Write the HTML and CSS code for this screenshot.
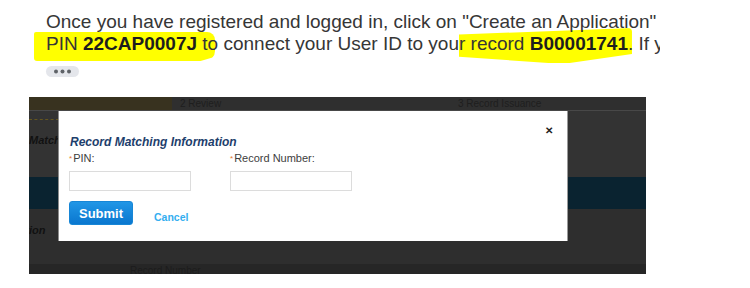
FILE: index.html
```html
<!DOCTYPE html>
<html lang="en">

<head>
    <meta charset="UTF-8">
    <title>Record Matching</title>
    <link rel="stylesheet" href="styles.css">
</head>

<body>
    <div class="message">
        <div class="text">
            <div class="line">Once you have registered and logged in, click on "Create an Application"</div>
            <div class="line"><span class="hl hl-one">PIN <b>22CAP0007J</b></span> to connect your User ID to you<span class="hl hl-two">r record <b>B00001741</b></span>. If you want</div>
        </div>
        <div class="more">
            <svg width="33" height="11" viewBox="0 0 33 11">
                <circle cx="10" cy="5.5" r="2" fill="#5f6368" />
                <circle cx="16.5" cy="5.5" r="2" fill="#5f6368" />
                <circle cx="23" cy="5.5" r="2" fill="#5f6368" />
            </svg>
        </div>
    </div>

    <div class="shot">
        <!-- steps bar -->
        <div class="steps">
            <div class="step step-done"></div>
            <div class="step step-review">2 Review</div>
            <div class="step">3 Record Issuance</div>
        </div>
        <div class="dash"></div>
        <div class="panel">
            <div class="panel-title">Matching</div>
        </div>
        <div class="navy"></div>
        <div class="lower">
            <div class="lower-title">Confirmation</div>
        </div>
        <div class="table-head">
            <span>Record Number</span>
        </div>

        <!-- modal dialog -->
        <div class="modal">
            <div class="modal-top">
                <span class="close">&#x2715;</span>
            </div>
            <h2 class="modal-title">Record Matching Information</h2>
            <div class="fields">
                <div class="field">
                    <label><span class="req">*</span>PIN:</label>
                    <input type="text">
                </div>
                <div class="field">
                    <label><span class="req">*</span>Record Number:</label>
                    <input type="text">
                </div>
            </div>
            <div class="actions">
                <button class="submit">Submit</button>
                <a class="cancel">Cancel</a>
            </div>
        </div>
    </div>
</body>

</html>
```

FILE: styles.css
```css
body {
    margin: 0;
    padding: 0;
    background-color: #fff;
    font-family: 'Liberation Sans', Arial, sans-serif;
}

.message {
    padding: 11px 0 0 34px;
}

.text {
    width: 626px;
    box-sizing: border-box;
    padding: 0 0 8px 12px;
    overflow: hidden;
    position: relative;
    z-index: 0;
}

.line {
    font-size: 19px;
    line-height: 22px;
    color: #363636;
    white-space: nowrap;
}

.line b {
    color: #1e1e1e;
}

.hl {
    position: relative;
}

.hl::before {
    content: "";
    position: absolute;
    background-color: #ffff00;
    z-index: -1;
}

.hl-one::before {
    top: -1px;
    bottom: -7px;
    left: -12px;
    right: -18px;
    border-radius: 2px 8px 10px 3px;
    clip-path: polygon(0 0, 100% 0, 100% 85%, 92% 100%, 0 100%);
}

.hl-two::before {
    top: -5px;
    bottom: -10px;
    left: 0;
    right: -4px;
    border-radius: 4px;
    clip-path: polygon(0 18%, 100% 0, 100% 72%, 60% 100%, 0 80%);
}

.more {
    width: 33px;
    height: 11px;
    margin: 3px 0 0 12px;
    background-color: #e4e6eb;
    border-radius: 6px;
}

.more svg {
    display: block;
}

/* screenshot of the application */
.shot {
    position: relative;
    margin: 20px 0 0 29px;
    width: 617px;
    height: 177px;
    overflow: hidden;
    background-color: #333;
    font-size: 10px;
    color: #1c1c1c;
}

.steps {
    display: flex;
    height: 13px;
    background-color: #2f2f2f;
    border-bottom: 1px solid #484848;
}

.step {
    flex: 1;
    padding: 2px 0 0 8px;
    line-height: 10px;
    color: #1e1e1e;
}

.step-done {
    flex: 0 0 143px;
    padding: 0;
    background-color: #38321f;
}

.step-review {
    flex: 0 0 270px;
}

.dash {
    width: 30px;
    height: 0;
    margin-top: 8px;
    border-top: 1px dashed #65561f;
}

.panel {
    height: 57px;
}

.panel-title {
    padding-top: 14px;
    font-size: 11px;
    font-weight: bold;
    font-style: italic;
    color: #111;
}

.navy {
    height: 32px;
    background-color: #0a2330;
}

.lower {
    height: 55px;
    background-color: #2e2e2e;
}

.lower-title {
    margin-left: -52px;
    padding-top: 15px;
    font-size: 11px;
    font-weight: bold;
    font-style: italic;
    color: #111;
}

.table-head {
    height: 10px;
    background-color: #262626;
    padding-left: 101px;
    line-height: 14px;
}

.modal {
    position: absolute;
    left: 29px;
    top: 14px;
    width: 510px;
    height: 130px;
    box-sizing: border-box;
    padding: 16px 11px 0 10px;
    background-color: #fff;
    border-left: 1px solid #8c8c8c;
    border-right: 1px solid #9a9a9a;
}

.modal-top {
    display: flex;
    justify-content: flex-end;
    height: 8px;
    padding-right: 3px;
}

.close {
    font-size: 10px;
    line-height: 8px;
    font-weight: bold;
    color: #222;
}

.modal-title {
    margin: 0 0 3px 1px;
    font-size: 12px;
    line-height: 14px;
    font-style: italic;
    font-weight: bold;
    color: #1d3e6c;
}

.fields {
    display: flex;
    gap: 39px;
}

.field {
    display: flex;
    flex-direction: column;
    width: 122px;
}

.field label {
    font-size: 11px;
    line-height: 13px;
    color: #3d3d3d;
    margin-bottom: 6px;
}

.req {
    color: #e0782c;
    font-size: 8px;
    vertical-align: top;
    margin-right: 1px;
}

.field input {
    width: 122px;
    height: 20px;
    box-sizing: border-box;
    border: 1px solid #dcdcdc;
    margin: 0;
    padding: 2px 4px;
}

.actions {
    display: flex;
    align-items: flex-end;
    gap: 21px;
    margin-top: 10px;
}

.submit {
    width: 64px;
    height: 24px;
    padding: 0;
    border: 1px solid #1786d6;
    border-radius: 3px;
    background: linear-gradient(#2196e6, #0a77cf);
    color: #fff;
    font-family: 'Liberation Sans', Arial, sans-serif;
    font-size: 13px;
    font-weight: bold;
}

.cancel {
    margin-bottom: 2px;
    font-size: 10.5px;
    font-weight: bold;
    color: #34aef0;
    cursor: pointer;
}
```
